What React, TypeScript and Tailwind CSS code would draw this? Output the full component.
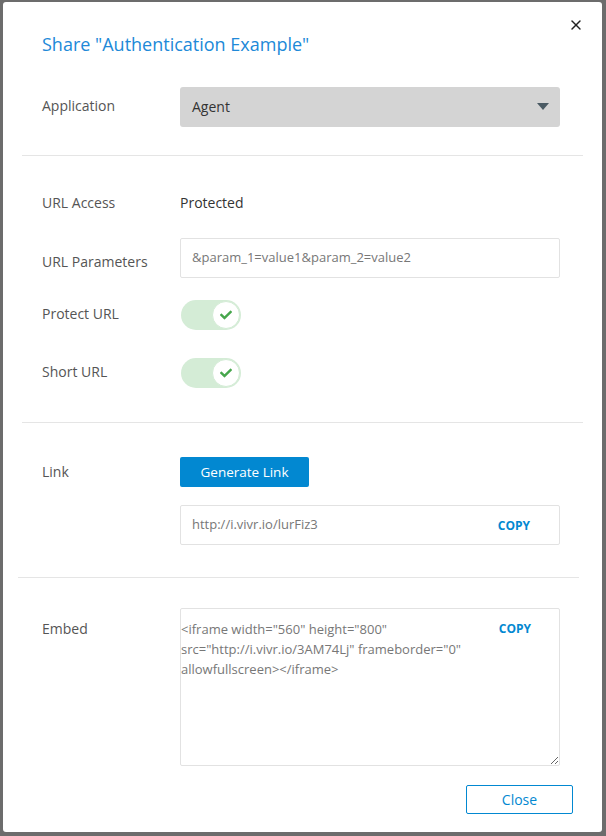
import { X } from 'lucide-react'
import { FaCheck } from 'react-icons/fa'

function Toggle() {
  return (
    <div className="w-[60px] h-[30px] rounded-full bg-[#d4ecd6] flex items-center justify-end pr-[1px]">
      <div className="w-[28px] h-[28px] rounded-full bg-white border border-[#d4ecd6] flex items-center justify-center">
        <FaCheck className="w-[12px] h-[12px] text-[#46a64c]" />
      </div>
    </div>
  )
}

export default function App() {
  const font = { fontFamily: '"Open Sans", "Liberation Sans", sans-serif' }
  const embed =
    '<iframe width="560" height="800" src="http://i.vivr.io/3AM74Lj" frameborder="0" allowfullscreen></iframe>'

  return (
    <div className="w-[606px] h-[836px] bg-[#6c6c6c] pl-[3px] pt-[2px]" style={font}>
      <div className="relative w-[599px] h-[830px] bg-white rounded-[3px] flex flex-col">
        <button className="absolute right-[18px] top-[15px] text-[#222]">
          <X className="w-[16px] h-[16px]" strokeWidth={2.2} />
        </button>

        {/* Title */}
        <h1 className="mt-[30px] ml-[39px] text-[18px] leading-[24px] text-[#2089d8]">
          Share "Authentication Example"
        </h1>

        {/* Application */}
        <div className="mt-[31px] flex items-center">
          <span className="ml-[39px] w-[138px] -mt-[3px] text-[14px] text-[#555]">Application</span>
          <div className="w-[380px] h-[40px] bg-[#d4d4d4] rounded-[3px] flex items-center justify-between pl-[12px] pr-[11px]">
            <span className="text-[14px] text-[#333] -mt-[1px]">Agent</span>
            <svg width="12" height="7" viewBox="0 0 12 7" className="-mt-[1px]">
              <path d="M0 0h12L6 7z" fill="#4a5a63" />
            </svg>
          </div>
        </div>

        <div className="mt-[28px] ml-[19px] w-[561px] h-px bg-[#e5e5e5]" />

        {/* URL Access */}
        <div className="mt-[36px] flex items-center h-[20px]">
          <span className="ml-[39px] w-[138px] text-[14px] text-[#555]">URL Access</span>
          <span className="text-[14px] text-[#333]">Protected</span>
        </div>

        <div className="mt-[26px] flex items-start">
          <span className="ml-[39px] w-[138px] pt-[14px] text-[14px] leading-[20px] text-[#555]">URL Parameters</span>
          <div className="w-[380px] h-[40px] border border-[#e2e2e2] rounded-[2px] flex items-center pl-[11px] text-[13px] text-[#777]">
            &amp;param_1=value1&amp;param_2=value2
          </div>
        </div>

        <div className="mt-[22px] flex items-center">
          <span className="ml-[39px] w-[139px] -mt-[4px] text-[14px] text-[#555]">Protect URL</span>
          <Toggle />
        </div>

        <div className="mt-[28px] flex items-center">
          <span className="ml-[39px] w-[139px] -mt-[3px] text-[14px] text-[#555]">Short URL</span>
          <Toggle />
        </div>

        <div className="mt-[34px] ml-[19px] w-[561px] h-px bg-[#e5e5e5]" />

        {/* Link */}
        <div className="mt-[34px] flex items-center">
          <span className="ml-[39px] w-[138px] -mt-[1px] text-[14px] text-[#555]">Link</span>
          <button className="w-[129px] h-[30px] bg-[#0288d1] rounded-[2px] text-white text-[13.5px]">
            Generate Link
          </button>
        </div>
        <div className="mt-[18px] ml-[177px] w-[380px] h-[40px] border border-[#e2e2e2] rounded-[2px] flex items-center justify-between pl-[11px] pr-[29px]">
          <span className="text-[13px] text-[#777]">http://i.vivr.io/lurFiz3</span>
          <span className="text-[12px] font-bold text-[#0288d1] mt-[2px]">COPY</span>
        </div>

        <div className="mt-[32px] ml-[15px] w-[561px] h-px bg-[#e5e5e5]" />

        {/* Embed */}
        <div className="mt-[30px] flex items-start">
          <span className="ml-[39px] w-[138px] pt-[11px] text-[14px] leading-[20px] text-[#555]">Embed</span>
          <div className="relative w-[380px] h-[158px]">
            <textarea
              readOnly
              value={embed}
              className="w-full h-full border border-[#e2e2e2] rounded-[2px] pt-[10px] pl-0 pr-[80px] text-[13px] leading-[20px] text-[#777] outline-none resize-y"
              style={font}
            />
            <span className="absolute right-[29px] top-[12px] text-[12px] font-bold text-[#0288d1]">COPY</span>
          </div>
        </div>

        <div className="mt-[19px] flex justify-end pr-[29px]">
          <button className="w-[107px] h-[29px] border border-[#0288d1] rounded-[2px] text-[#0288d1] text-[14px]">
            Close
          </button>
        </div>
      </div>
    </div>
  )
}
